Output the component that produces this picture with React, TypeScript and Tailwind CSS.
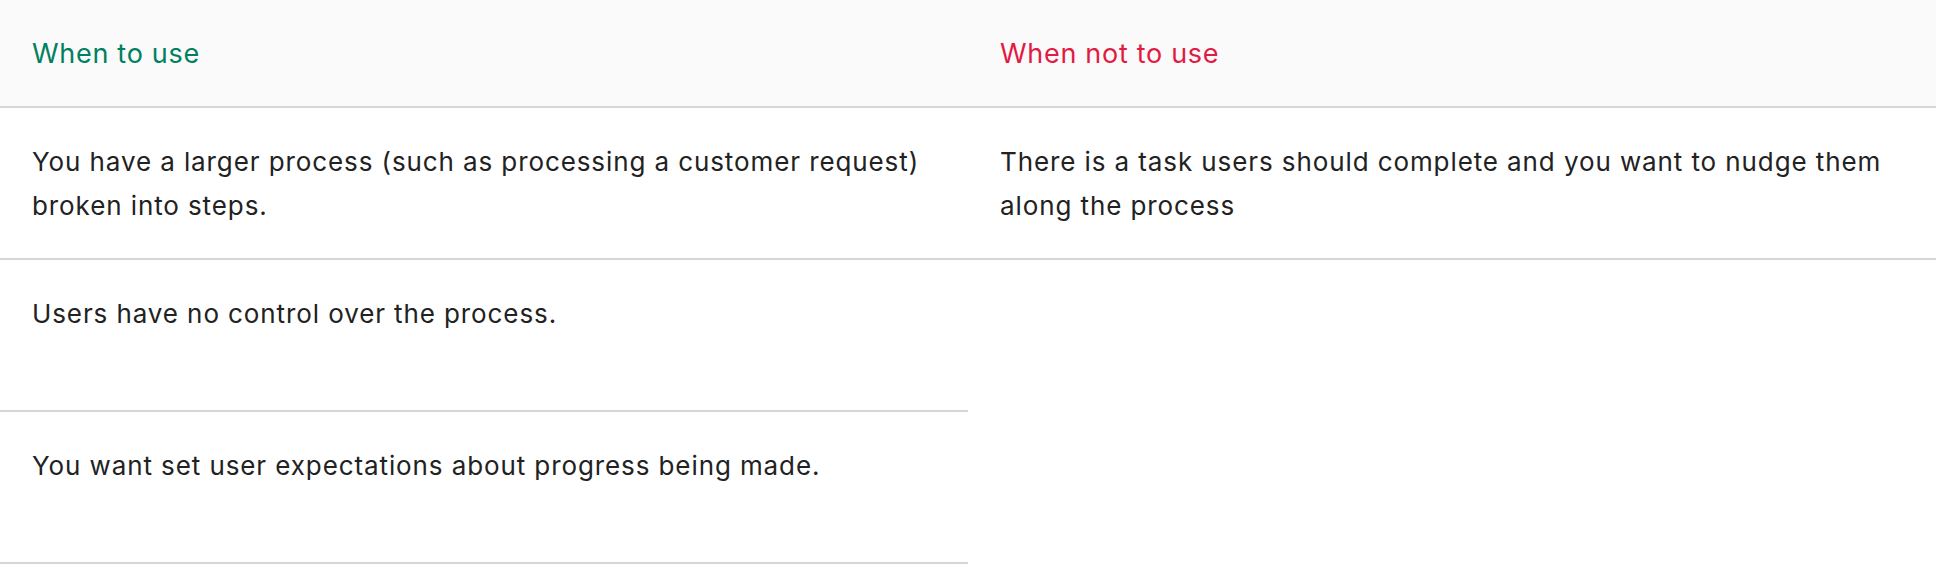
const doItems = [
  "You have a larger process (such as processing a customer request) broken into steps.",
  "Users have no control over the process.",
  "You want set user expectations about progress being made.",
];

const dontItems = [
  "There is a task users should complete and you want to nudge them along the process",
];

function UsageColumn({ title, items, tone }: { title: string; items: string[]; tone: "do" | "dont" }) {
  return (
    <div className="flex flex-col">
      <div className="h-[108px] flex items-center px-8 bg-[#fafafa] border-b-2 border-[#d6d6d6]">
        <h3
          className={
            tone === "do"
              ? "text-[27px] leading-none tracking-[0.7px] text-[#008060]"
              : "text-[27px] leading-none tracking-[0.7px] text-[#e21a44]"
          }
        >
          {title}
        </h3>
      </div>
      {items.map((item) => (
        <div key={item} className="h-[152px] px-8 pt-[32px] border-b-2 border-[#d6d6d6]">
          <p className="text-[26px] leading-[44px] tracking-[0.9px] text-[#222222]">{item}</p>
        </div>
      ))}
    </div>
  );
}

export default function App() {
  return (
    <div className="w-[1936px] bg-white" style={{ fontFamily: "Inter, 'Noto Sans', sans-serif" }}>
      <div className="grid grid-cols-2">
        <UsageColumn title="When to use" items={doItems} tone="do" />
        <UsageColumn title="When not to use" items={dontItems} tone="dont" />
      </div>
    </div>
  );
}
